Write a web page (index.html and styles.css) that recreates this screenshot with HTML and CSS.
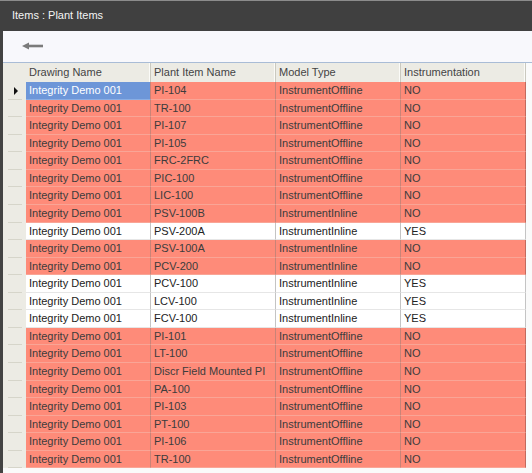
FILE: index.html
```html
<!DOCTYPE html>
<html>
<head>
<meta charset="utf-8">
<link rel="stylesheet" href="styles.css">
</head>
<body>
<div class="titlebar">Items : Plant Items</div>
<div class="main">
  <div class="frame"></div>
  <div class="content">
    <div class="toolbar">
      <svg class="back" width="22" height="8" viewBox="0 0 22 8"><polygon points="0,4 7,0.5 7,7.5" fill="#7b7b7b"/><rect x="6" y="2.7" width="15" height="2.6" fill="#7b7b7b"/></svg>
    </div>
    <div class="grid">
      <div class="row head">
        <div class="rh"></div>
        <div class="c">Drawing Name</div>
        <div class="c">Plant Item Name</div>
        <div class="c">Model Type</div>
        <div class="c">Instrumentation</div>
        <div class="fill"></div>
      </div>
      <div class="row red"><div class="rh cur"><span class="tri"></span></div><div class="c sel">Integrity Demo 001</div><div class="c">PI-104</div><div class="c">InstrumentOffline</div><div class="c">NO</div><div class="fill"></div></div>
      <div class="row red"><div class="rh"></div><div class="c">Integrity Demo 001</div><div class="c">TR-100</div><div class="c">InstrumentOffline</div><div class="c">NO</div><div class="fill"></div></div>
      <div class="row red"><div class="rh"></div><div class="c">Integrity Demo 001</div><div class="c">PI-107</div><div class="c">InstrumentOffline</div><div class="c">NO</div><div class="fill"></div></div>
      <div class="row red"><div class="rh"></div><div class="c">Integrity Demo 001</div><div class="c">PI-105</div><div class="c">InstrumentOffline</div><div class="c">NO</div><div class="fill"></div></div>
      <div class="row red"><div class="rh"></div><div class="c">Integrity Demo 001</div><div class="c">FRC-2FRC</div><div class="c">InstrumentOffline</div><div class="c">NO</div><div class="fill"></div></div>
      <div class="row red"><div class="rh"></div><div class="c">Integrity Demo 001</div><div class="c">PIC-100</div><div class="c">InstrumentOffline</div><div class="c">NO</div><div class="fill"></div></div>
      <div class="row red"><div class="rh"></div><div class="c">Integrity Demo 001</div><div class="c">LIC-100</div><div class="c">InstrumentOffline</div><div class="c">NO</div><div class="fill"></div></div>
      <div class="row red"><div class="rh"></div><div class="c">Integrity Demo 001</div><div class="c">PSV-100B</div><div class="c">InstrumentInline</div><div class="c">NO</div><div class="fill"></div></div>
      <div class="row white"><div class="rh"></div><div class="c">Integrity Demo 001</div><div class="c">PSV-200A</div><div class="c">InstrumentInline</div><div class="c">YES</div><div class="fill"></div></div>
      <div class="row red"><div class="rh"></div><div class="c">Integrity Demo 001</div><div class="c">PSV-100A</div><div class="c">InstrumentInline</div><div class="c">NO</div><div class="fill"></div></div>
      <div class="row red"><div class="rh"></div><div class="c">Integrity Demo 001</div><div class="c">PCV-200</div><div class="c">InstrumentInline</div><div class="c">NO</div><div class="fill"></div></div>
      <div class="row white"><div class="rh"></div><div class="c">Integrity Demo 001</div><div class="c">PCV-100</div><div class="c">InstrumentInline</div><div class="c">YES</div><div class="fill"></div></div>
      <div class="row white"><div class="rh"></div><div class="c">Integrity Demo 001</div><div class="c">LCV-100</div><div class="c">InstrumentInline</div><div class="c">YES</div><div class="fill"></div></div>
      <div class="row white"><div class="rh"></div><div class="c">Integrity Demo 001</div><div class="c">FCV-100</div><div class="c">InstrumentInline</div><div class="c">YES</div><div class="fill"></div></div>
      <div class="row red"><div class="rh"></div><div class="c">Integrity Demo 001</div><div class="c">PI-101</div><div class="c">InstrumentOffline</div><div class="c">NO</div><div class="fill"></div></div>
      <div class="row red"><div class="rh"></div><div class="c">Integrity Demo 001</div><div class="c">LT-100</div><div class="c">InstrumentOffline</div><div class="c">NO</div><div class="fill"></div></div>
      <div class="row red"><div class="rh"></div><div class="c">Integrity Demo 001</div><div class="c">Discr Field Mounted PI</div><div class="c">InstrumentOffline</div><div class="c">NO</div><div class="fill"></div></div>
      <div class="row red"><div class="rh"></div><div class="c">Integrity Demo 001</div><div class="c">PA-100</div><div class="c">InstrumentOffline</div><div class="c">NO</div><div class="fill"></div></div>
      <div class="row red"><div class="rh"></div><div class="c">Integrity Demo 001</div><div class="c">PI-103</div><div class="c">InstrumentOffline</div><div class="c">NO</div><div class="fill"></div></div>
      <div class="row red"><div class="rh"></div><div class="c">Integrity Demo 001</div><div class="c">PT-100</div><div class="c">InstrumentOffline</div><div class="c">NO</div><div class="fill"></div></div>
      <div class="row red"><div class="rh"></div><div class="c">Integrity Demo 001</div><div class="c">PI-106</div><div class="c">InstrumentOffline</div><div class="c">NO</div><div class="fill"></div></div>
      <div class="row red"><div class="rh"></div><div class="c">Integrity Demo 001</div><div class="c">TR-100</div><div class="c">InstrumentOffline</div><div class="c">NO</div><div class="fill"></div></div>
    </div>
  </div>
</div>
</body>
</html>
```
FILE: styles.css
```css
html, body {
  margin: 0;
  padding: 0;
}
body {
  width: 532px;
  height: 473px;
  overflow: hidden;
  background: #fafafa;
  font-family: "Liberation Sans", Arial, sans-serif;
  font-size: 11px;
}
.titlebar {
  box-sizing: border-box;
  height: 31px;
  background: #404040;
  border-top: 1px solid #8c8c8c;
  color: #f4f4f4;
  padding-left: 12px;
  line-height: 28px;
}
.main {
  display: flex;
  height: 442px;
}
.frame {
  width: 3px;
  background: #434343;
  flex: none;
}
.content {
  flex: 1;
  display: flex;
  flex-direction: column;
  background: #fafafa;
}
.toolbar {
  box-sizing: border-box;
  height: 32px;
  background: #f8f8fc;
  border-bottom: 1px solid #a9bcd6;
  display: flex;
  align-items: center;
  padding-left: 19px;
  padding-bottom: 1px;
}
.back {
  display: block;
}
.grid {
  display: flex;
  flex-direction: column;
}
.row {
  display: flex;
  box-sizing: border-box;
  height: 17.57px;
  line-height: 17px;
}
.row.head {
  height: 19px;
  line-height: 18px;
  background: #ecebe4;
  color: #444;
}
.rh {
  width: 23px;
  flex: none;
  background: #ecebe4;
  position: relative;
}
.row:not(.head) .rh::after {
  content: "";
  position: absolute;
  left: 5px;
  width: 14px;
  bottom: 0;
  height: 1px;
  background: #d6d5ca;
}
.tri {
  position: absolute;
  left: 11px;
  top: 5px;
  width: 0;
  height: 0;
  border-left: 4px solid #111;
  border-top: 4px solid transparent;
  border-bottom: 4px solid transparent;
}
.c {
  box-sizing: border-box;
  width: 125px;
  flex: none;
  padding-left: 3px;
  white-space: nowrap;
  overflow: hidden;
}
.head .c {
  border-right: 1px solid #cac9bf;
  box-shadow: inset -1px 0 0 #fbfbf8;
}
.fill {
  flex: 1;
  background: #fafafa;
}
.red .c {
  background: #fe8b79;
  color: #3c3c3c;
  border-right: 1px solid #c98377;
  border-bottom: 1px solid #f9a596;
}
.red .c.sel {
  background: #6d96d8;
  color: #ffffff;
  border-bottom-color: #8aaee4;
}
.white .c {
  background: #ffffff;
  color: #222;
  border-right: 1px solid #c4c4c4;
  border-bottom: 1px solid #e6e6e6;
}
.red .c:nth-child(5) {
  border-right-color: #c26a5d;
}
```
